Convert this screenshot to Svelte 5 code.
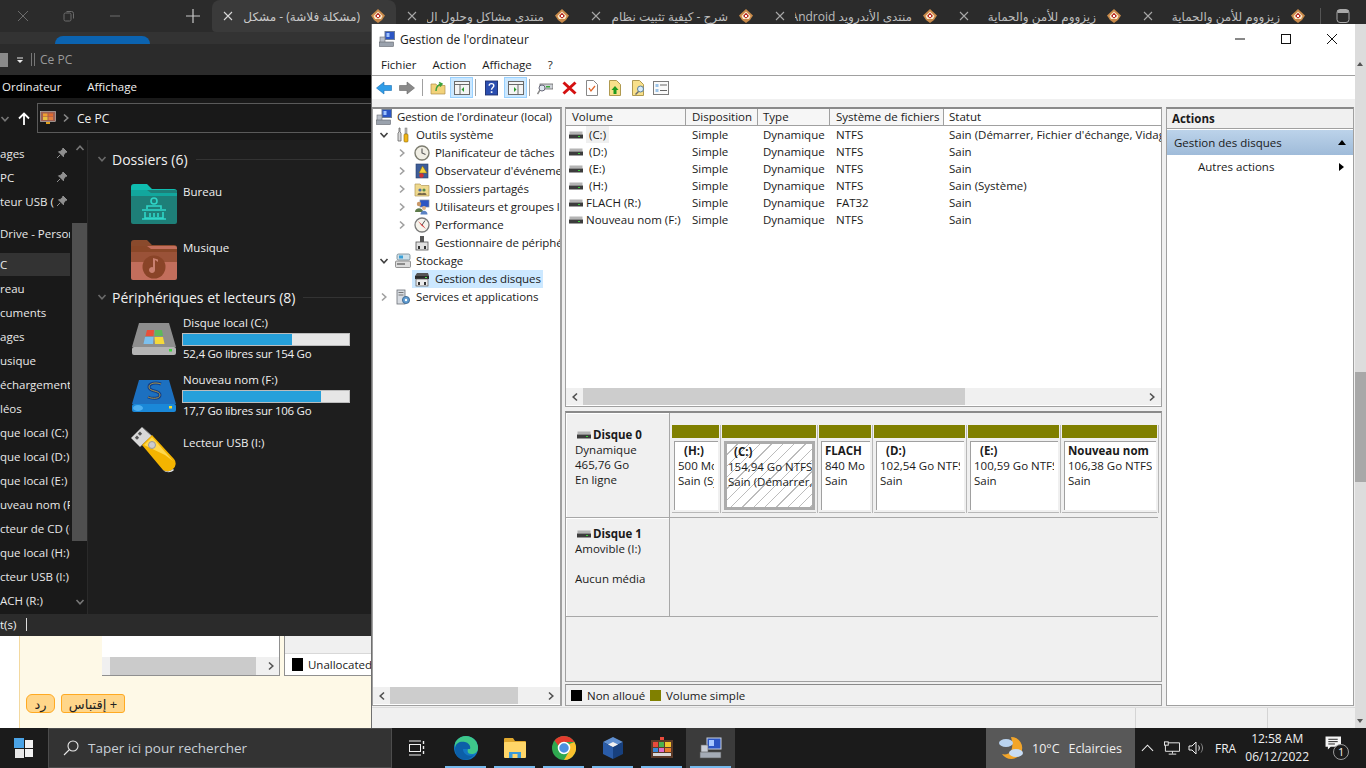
<script lang="ts">
  const tabs = [
    { t: '(مشكلة فلاشة) - مشكل', active: true },
    { t: 'منتدى مشاكل وحلول ال' },
    { t: 'شرح - كيفية تثبيت نظام' },
    { t: 'منتدى الأندرويد Android' },
    { t: 'زيزووم للأمن والحماية' },
    { t: 'زيزووم للأمن والحماية' }
  ];

  const nav = [
    { t: 'ages', pin: true },
    { t: 'PC', pin: true },
    { t: 'teur USB (', pin: true },
    { t: 'Drive - Personnel', gap: true },
    { t: 'C', gap: true, sel: true },
    { t: 'reau' },
    { t: 'cuments' },
    { t: 'ages' },
    { t: 'usique' },
    { t: 'échargements' },
    { t: 'léos' },
    { t: 'que local (C:)' },
    { t: 'que local (D:)' },
    { t: 'que local (E:)' },
    { t: 'uveau nom (F:)' },
    { t: 'cteur de CD (G:)' },
    { t: 'que local (H:)' },
    { t: 'cteur USB (I:)' },
    { t: 'ACH (R:)' }
  ];

  const tree = [
    { t: "Gestion de l'ordinateur (local)", d: 0, ic: 'pc' },
    { t: 'Outils système', d: 1, ic: 'tools', ch: 'down' },
    { t: 'Planificateur de tâches', d: 2, ic: 'clock', ch: 'right' },
    { t: "Observateur d'événements", d: 2, ic: 'event', ch: 'right' },
    { t: 'Dossiers partagés', d: 2, ic: 'share', ch: 'right' },
    { t: 'Utilisateurs et groupes locaux', d: 2, ic: 'users', ch: 'right' },
    { t: 'Performance', d: 2, ic: 'perf', ch: 'right' },
    { t: 'Gestionnaire de périphériques', d: 2, ic: 'dev' },
    { t: 'Stockage', d: 1, ic: 'store', ch: 'down' },
    { t: 'Gestion des disques', d: 2, ic: 'disk', sel: true },
    { t: 'Services et applications', d: 1, ic: 'serv', ch: 'right' }
  ];

  const columns = ['Volume', 'Disposition', 'Type', 'Système de fichiers', 'Statut'];
  const volumes = [
    { v: ' (C:)', fs: 'NTFS', st: "Sain (Démarrer, Fichier d'échange, Vidage sur incident)", cur: true },
    { v: ' (D:)', fs: 'NTFS', st: 'Sain' },
    { v: ' (E:)', fs: 'NTFS', st: 'Sain' },
    { v: ' (H:)', fs: 'NTFS', st: 'Sain (Système)' },
    { v: 'FLACH (R:)', fs: 'FAT32', st: 'Sain' },
    { v: 'Nouveau nom (F:)', fs: 'NTFS', st: 'Sain' }
  ];

  const parts = [
    { n: '(H:)', s: '500 Mo NTFS', h: 'Sain (Système)', w: 50, ind: true },
    { n: '(C:)', s: '154,94 Go NTFS', h: 'Sain (Démarrer, Fichier', w: 97, ind: true, sel: true },
    { n: 'FLACH', s: '840 Mo FAT32', h: 'Sain', w: 55 },
    { n: '(D:)', s: '102,54 Go NTFS', h: 'Sain', w: 94, ind: true },
    { n: '(E:)', s: '100,59 Go NTFS', h: 'Sain', w: 94, ind: true },
    { n: 'Nouveau nom', s: '106,38 Go NTFS', h: 'Sain', w: 98 }
  ];
</script>

{#snippet chev(dir, color = '#606060')}
  <svg class="chev" viewBox="0 0 10 10" fill="none" stroke={color} stroke-width="1.6" aria-hidden="true">
    {#if dir === 'down'}<polyline points="1.5,3 5,6.8 8.5,3" />
    {:else if dir === 'up'}<polyline points="1.5,7 5,3.2 8.5,7" />
    {:else if dir === 'left'}<polyline points="7,1.5 3.2,5 7,8.5" />
    {:else}<polyline points="3,1.5 6.8,5 3,8.5" />{/if}
  </svg>
{/snippet}

{#snippet favicon()}
  <svg class="fav" viewBox="0 0 16 16" aria-hidden="true">
    <path d="M8 1 15 7.5 12 12 8 15 4 12 1 7.5Z" fill="#c98a4a" />
    <path d="M8 3.5 12.5 8 11 11H5L3.5 8Z" fill="#fbeccb" />
    <path d="M8 4.8 11 8 8 10.5 5 8Z" fill="#b3231f" />
    <rect x="7" y="7" width="2" height="2" fill="#fff" />
  </svg>
{/snippet}

{#snippet drive()}
  <svg class="drive" viewBox="0 0 14 8" aria-hidden="true">
    <rect x="0.5" y="0.5" width="13" height="3" fill="#b4b4b4" />
    <rect x="0" y="3.5" width="14" height="4" fill="#3c3c3c" />
    <rect x="9" y="5" width="2" height="1" fill="#38d038" />
  </svg>
{/snippet}

{#snippet treeIcon(ic)}
  <svg class="ticon" viewBox="0 0 16 16" aria-hidden="true">
    {#if ic === 'pc'}
      <rect x="6" y="0.5" width="9.5" height="8" fill="#2b55c4" stroke="#6f7f99" />
      <rect x="7.5" y="2" width="3" height="4" fill="#9fc3ff" />
      <rect x="1" y="6" width="5" height="6" fill="#b8bec8" stroke="#6b6f76" stroke-width="0.6" />
      <rect x="0.5" y="11" width="14" height="4.5" fill="#9aa2ad" stroke="#60656c" stroke-width="0.6" />
    {:else if ic === 'tools'}
      <path d="M4 1v4l-1 1v8h3V6L5 5V1Z" fill="#d9d9d9" stroke="#666" stroke-width="0.8" />
      <rect x="10" y="1" width="2" height="6" fill="#b8b8b8" stroke="#777" stroke-width="0.5" />
      <rect x="9" y="7" width="4" height="8" rx="1" fill="#f0b418" stroke="#8a6a08" stroke-width="0.6" />
    {:else if ic === 'clock'}
      <circle cx="8" cy="8" r="7" fill="#f0eee4" stroke="#7d7d70" stroke-width="1.4" />
      <polyline points="8,3.5 8,8 11.5,9.5" fill="none" stroke="#555" stroke-width="1.1" />
    {:else if ic === 'event'}
      <rect x="2" y="1" width="12" height="14" fill="#3d5d99" stroke="#2a3f6a" stroke-width="0.6" />
      <path d="M8.5 3 13 10H5Z" fill="#f6d33c" stroke="#8a6a08" stroke-width="0.5" />
      <circle cx="7.5" cy="12.5" r="2.2" fill="#d13232" />
    {:else if ic === 'share'}
      <path d="M1 3h5l1.5 1.5H15V15H1Z" fill="#efd98d" stroke="#b2985a" stroke-width="0.7" />
      <circle cx="6" cy="9" r="1.6" fill="#4d6fa8" /><circle cx="10" cy="9" r="1.6" fill="#578c4d" />
      <path d="M3.5 14c0-3 5-3 5 0ZM7.5 14c0-3 5-3 5 0Z" fill="#7a6a4a" />
    {:else if ic === 'users'}
      <rect x="6" y="1" width="9" height="7" fill="#2b55c4" stroke="#7d8ba2" stroke-width="0.7" />
      <circle cx="5" cy="5" r="2.2" fill="#c99868" /><path d="M1 13c0-5 8-5 8 0Z" fill="#5d7a4a" />
      <circle cx="10" cy="9" r="2" fill="#dcb188" /><path d="M6.5 15.5c0-5 7-5 7 0Z" fill="#5b82c4" />
    {:else if ic === 'perf'}
      <circle cx="8" cy="8" r="7" fill="#f6f4ec" stroke="#7a7a7a" stroke-width="1.3" />
      <path d="M4 4 9 8.5 12 12 7.5 8.5Z" fill="#d02020" />
      <path d="M11 3.5 8 8" stroke="#555" fill="none" />
    {:else if ic === 'dev'}
      <rect x="6" y="1" width="4" height="6" fill="#555" />
      <rect x="2" y="7" width="12" height="8" fill="#e2e2e2" stroke="#555" stroke-width="0.8" />
      <rect x="4" y="11" width="2" height="3" fill="#333" /><rect x="10" y="11" width="2" height="3" fill="#333" />
    {:else if ic === 'store'}
      <rect x="2" y="1" width="13" height="6" rx="1.5" fill="#cfe1ea" stroke="#5f7480" stroke-width="0.7" />
      <rect x="4" y="2.5" width="4" height="3" fill="#3aa0d8" />
      <rect x="0.5" y="8" width="15" height="6.5" rx="1" fill="#dcdcdc" stroke="#6a6a6a" stroke-width="0.7" />
      <rect x="2" y="10" width="8" height="2" fill="#8a8a8a" />
    {:else if ic === 'disk'}
      <path d="M3 2h11l1 3H1Z" fill="#555" />
      <rect x="1" y="5" width="14" height="3" fill="#2a2a2a" /><rect x="11" y="6" width="2" height="1" fill="#4ee04e" />
      <rect x="2" y="8" width="12" height="7" fill="#ededed" stroke="#555" stroke-width="0.7" />
      <rect x="4" y="11" width="2" height="3" fill="#333" /><rect x="10" y="11" width="2" height="3" fill="#333" />
    {:else}
      <rect x="2" y="1" width="8" height="14" fill="#d8dce2" stroke="#6d7178" stroke-width="0.8" />
      <rect x="3.5" y="3" width="5" height="1" fill="#777" /><rect x="3.5" y="5.5" width="5" height="1" fill="#777" />
      <circle cx="11" cy="11" r="3.6" fill="#5f9bd0" stroke="#34608a" stroke-width="0.8" /><circle cx="11" cy="11" r="1.2" fill="#fff" />
    {/if}
  </svg>
{/snippet}

<div class="desk">
  <header class="tabstrip">
    <div class="wincaps">
      <svg viewBox="0 0 12 12" aria-hidden="true"><path d="M1 1 11 11M11 1 1 11" stroke="#6c6c6c" fill="none" /></svg>
      <svg viewBox="0 0 12 12" aria-hidden="true"><rect x="1" y="3" width="7" height="8" rx="1.5" fill="none" stroke="#6c6c6c" /><path d="M3.5 1.5h5a2 2 0 0 1 2 2v5" fill="none" stroke="#6c6c6c" /></svg>
      <svg viewBox="0 0 12 12" aria-hidden="true"><path d="M1 6h10" stroke="#6c6c6c" fill="none" /></svg>
    </div>
    <svg class="newtab" viewBox="0 0 16 16" aria-hidden="true"><path d="M8 1v14M1 8h14" stroke="#c8c8c8" fill="none" stroke-width="1.2" /></svg>
    {#each tabs as tab}
      <div class="tab" class:active={tab.active}>
        <svg class="tabx" viewBox="0 0 10 10" aria-hidden="true"><path d="M1 1 9 9M9 1 1 9" stroke={tab.active ? '#d8d8d8' : '#a8a8a8'} fill="none" stroke-width="1.1" /></svg>
        <span class="tabtitle" dir="rtl">{tab.t}</span>
        {@render favicon()}
      </div>
    {/each}
    <i class="tabsep"></i>
    <svg class="tabsearch" viewBox="0 0 14 16" aria-hidden="true"><rect x="1" y="1.5" width="12" height="13" rx="3" fill="none" stroke="#a8a8a8" /><path d="M1.5 4.5h11" stroke="#a8a8a8" /><rect x="1.5" y="2" width="11" height="2.5" fill="#a8a8a8" /></svg>
  </header>

  <div class="browserbar"><span class="pill"></span></div>

  <section class="forum">
    <div class="forum-post">
      <div class="attach">
        <div class="attach-tree">
          <div class="attach-scroll">
            <span class="attach-thumb"></span>
            {@render chev('right', '#555')}
          </div>
        </div>
        <div class="attach-legend"><div class="attach-key"><i></i>Unallocated</div></div>
      </div>
      <div class="forum-btns">
        <span class="fbtn round" dir="rtl">رد</span>
        <span class="fbtn" dir="rtl">+ إقتباس</span>
      </div>
    </div>
  </section>

  <section class="explorer">
    <div class="ex-title">
      <span class="ex-qa"></span>
      <svg class="ex-drop" viewBox="0 0 10 10" aria-hidden="true"><path d="M2 2.5h6v1H2ZM2 5h6L5 8Z" fill="#e8e8e8" /></svg>
      <i class="ex-bar"></i>
      <span>Ce PC</span>
    </div>
    <nav class="ex-menu"><span>Ordinateur</span><span>Affichage</span></nav>
    <div class="ex-address">
      {@render chev('down', '#777')}
      <svg class="ex-up" viewBox="0 0 14 14" aria-hidden="true"><path d="M7 1.5v11.5M2 6.5 7 1.5 12 6.5" stroke="#fff" stroke-width="1.8" fill="none" /></svg>
      <div class="ex-path">
        <svg class="ex-pc" viewBox="0 0 16 14" aria-hidden="true">
          <rect x="0.5" y="0.5" width="15" height="10" fill="#a06050" stroke="#c8c8c8" stroke-width="0.6" />
          <rect x="3" y="2.5" width="4.5" height="3" fill="#f0a030" /><rect x="8.5" y="2.5" width="4.5" height="3" fill="#e06a30" />
          <rect x="3" y="6" width="4.5" height="3" fill="#e8c040" /><rect x="8.5" y="6" width="4.5" height="3" fill="#e08040" />
          <rect x="6" y="11" width="4" height="2" fill="#e0a020" />
        </svg>
        {@render chev('right', '#888')}
        <span>Ce PC</span>
      </div>
    </div>
    <div class="ex-body">
      <aside class="ex-nav">
        {#each nav as row}
          <div class="nav-row" class:gap={row.gap} class:sel={row.sel}>
            <span class="nav-text">{row.t}</span>
            {#if row.pin}
              <svg class="pin" viewBox="0 0 12 12" aria-hidden="true"><path d="M7 1 11 5 9.5 5.5 7.5 8 7.5 9.8 2.5 4.8 4.2 4.5 6.5 2.5ZM4 8 1 11" fill="#8f8f8f" stroke="#8f8f8f" /></svg>
            {/if}
          </div>
        {/each}
        <div class="nav-scroll">
          {@render chev('up', '#777')}
          <span class="nav-thumb"></span>
          {@render chev('down', '#777')}
        </div>
      </aside>
      <div class="ex-main">
        <div class="group first">{@render chev('down', '#6a6a6a')}<span>Dossiers (6)</span><i></i></div>
        <div class="folder">
          <svg class="bigicon" viewBox="0 0 46 40" aria-hidden="true">
            <path d="M0 3a3 3 0 0 1 3-3h13l5 5h22a3 3 0 0 1 3 3v5H0Z" fill="#0fbdb0" />
            <rect y="6" width="46" height="34" rx="2" fill="#1e7f78" />
            <path d="M0 6h16l4 3h26v3H0Z" fill="#12a79d" />
            <g fill="none" stroke="#2fd6c8" stroke-width="1.6">
              <circle cx="23" cy="17" r="3" />
              <path d="M16 25v-3h14v3M11 26h24M14 28v6h18v-6M11 35h24M19 29v4M23 29v4M27 29v4" />
            </g>
          </svg>
          <span class="f-label">Bureau</span>
        </div>
        <div class="folder short">
          <svg class="bigicon" viewBox="0 0 46 40" aria-hidden="true">
            <path d="M0 3a3 3 0 0 1 3-3h13l5 5h22a3 3 0 0 1 3 3v5H0Z" fill="#8a4a2c" />
            <rect y="6" width="46" height="34" rx="2" fill="#c26e5c" />
            <path d="M0 6h16l4 3h26v3H0Z" fill="#8a4728" />
            <path d="M0 12h46v10H0Z" fill="#9a5238" />
            <circle cx="23" cy="27" r="11.5" fill="#8a4428" />
            <path d="M24 20v10a3 3 0 1 1-2-2.8V18l5 1.5v2.5Z" fill="#c98070" />
          </svg>
          <span class="f-label">Musique</span>
        </div>
        <div class="group">{@render chev('down', '#6a6a6a')}<span>Périphériques et lecteurs (8)</span><i></i></div>
        <div class="dsk first">
          <svg class="bigicon hd" viewBox="0 0 46 36" aria-hidden="true">
            <path d="M8 2h30l7 24H1Z" fill="#8e8e8e" /><rect x="1" y="26" width="44" height="8" rx="2" fill="#b4b4b4" />
            <path d="M16 9h7l-.5 6h-8Z" fill="#e8503a" /><path d="M24 9h7l1 6h-8.500Z" fill="#5eb85a" />
            <path d="M14 16h8.500l-.5 7H12.500Z" fill="#7cc0ee" /><path d="M23.500 16H32l1.500 7H24Z" fill="#f5d93a" />
            <rect x="38" y="28" width="3" height="2.500" fill="#3fd23f" />
          </svg>
          <div class="dsk-text">
            <span>Disque local (C:)</span>
            <div class="bar"><i class="c"></i></div>
            <span class="free">52,4 Go libres sur 154 Go</span>
          </div>
        </div>
        <div class="dsk">
          <svg class="bigicon hd" viewBox="0 0 46 36" aria-hidden="true">
            <path d="M8 2h30l7 24H1Z" fill="#1c70c0" /><rect x="1" y="26" width="44" height="8" rx="2" fill="#1a88d8" />
            <ellipse cx="7" cy="30" rx="5" ry="3" fill="#4db0f0" />
            <path d="M30 6c-5-2-12-1-12 3 0 5 11 3 11 8 0 4-8 4-12 2" fill="none" stroke="#123e88" stroke-width="3" />
            <path d="M30 6c-5-2-12-1-12 3 0 5 11 3 11 8 0 4-8 4-12 2" fill="none" stroke="#c8a83a" stroke-width="0.8" />
            <rect x="38" y="28" width="3" height="2.500" fill="#f0e030" />
          </svg>
          <div class="dsk-text">
            <span>Nouveau nom (F:)</span>
            <div class="bar"><i class="f"></i></div>
            <span class="free">17,7 Go libres sur 106 Go</span>
          </div>
        </div>
        <div class="usb">
          <svg class="bigicon usbicon" viewBox="0 0 46 46" aria-hidden="true">
            <path d="M0 11 11 0 21 9 9 20Z" fill="#d8d8d8" stroke="#777" />
            <rect x="8" y="5" width="3" height="3" fill="#555" transform="rotate(45 9 6)" /><rect x="5" y="9" width="3" height="3" fill="#555" transform="rotate(45 6 10)" />
            <path d="M11 18 21 8 43 32a7 7 0 0 1-1 10c-3 3-7 3-10 1Z" fill="#f4b400" />
            <path d="M13 18 21 10 42 34 34 28Z" fill="#ffd84d" />
            <circle cx="21" cy="18" r="3.500" fill="#ccc" stroke="#999" />
            <path d="M32 43c3 2 7 2 10-1l1 1c-3 3-8 3-11 0Z" fill="#e8e8e8" />
          </svg>
          <span class="f-label">Lecteur USB (I:)</span>
        </div>
      </div>
    </div>
    <div class="ex-status"><span>t(s)</span><i></i></div>
  </section>

  <section class="mmc">
    <div class="mmc-title">
      {@render treeIcon('pc')}
      <span class="mmc-name">Gestion de l'ordinateur</span>
      <div class="mmc-caps">
        <svg viewBox="0 0 12 12" aria-hidden="true"><path d="M1 6h10" stroke="#111" fill="none" /></svg>
        <svg viewBox="0 0 12 12" aria-hidden="true"><rect x="1.500" y="1.500" width="9" height="9" stroke="#111" fill="none" /></svg>
        <svg viewBox="0 0 12 12" aria-hidden="true"><path d="M1 1 11 11M11 1 1 11" stroke="#111" fill="none" /></svg>
      </div>
    </div>
    <nav class="mmc-menu"><span>Fichier</span><span>Action</span><span>Affichage</span><span>?</span></nav>
    <div class="mmc-tools">
      <svg class="t" viewBox="0 0 16 14" aria-hidden="true"><path d="M0.500 7 8 1v3.500h7.500v5H8V13Z" fill="#2f9de8" stroke="#1b6fb4" stroke-width="0.6" /></svg>
      <svg class="t" viewBox="0 0 16 14" aria-hidden="true"><path d="M15.500 7 8 1v3.500H0.500v5H8V13Z" fill="#8a8a8a" stroke="#666" stroke-width="0.6" /></svg>
      <i class="sep"></i>
      <svg class="t" viewBox="0 0 16 14" aria-hidden="true"><path d="M1 3h5l1 1.500h8V13H1Z" fill="#f2d27a" stroke="#b0904c" stroke-width="0.7" /><path d="M6 10c0-4 2-6 5-7M9 1.500 12 3 10 5.500" fill="none" stroke="#3ca03c" stroke-width="1.500" /></svg>
      <span class="tbtn on">
        <svg viewBox="0 0 16 14" aria-hidden="true"><rect x="0.500" y="0.500" width="15" height="13" fill="#f4f4f4" stroke="#6a6a6a" /><path d="M1 3.500h14" stroke="#6a6a6a" /><path d="M6 3.500V13.500" stroke="#6a6a6a" /><path d="M10 6v5L7.500 8.500Z" fill="#2a9a2a" /></svg>
      </span>
      <i class="sep"></i>
      <svg class="t help" viewBox="0 0 14 16" aria-hidden="true"><rect x="0.500" y="0.500" width="13" height="15" fill="#2b4eb0" stroke="#1c2f70" /><path d="M4.500 5.500c0-3 5-3 5 0 0 2-2.500 2-2.500 4.500" fill="none" stroke="#fff" stroke-width="1.500" /><rect x="6.200" y="11.500" width="1.800" height="1.800" fill="#fff" /></svg>
      <span class="tbtn on">
        <svg viewBox="0 0 16 14" aria-hidden="true"><rect x="0.500" y="0.500" width="15" height="13" fill="#f4f4f4" stroke="#6a6a6a" /><path d="M1 3.500h14" stroke="#6a6a6a" /><path d="M10 3.500V13.500" stroke="#6a6a6a" /><path d="M6 6v5L8.500 8.500Z" fill="#2a9a2a" /></svg>
      </span>
      <i class="sep"></i>
      <svg class="t" viewBox="0 0 16 14" aria-hidden="true"><rect x="3" y="3" width="13" height="5" fill="#cfd3d8" stroke="#555" stroke-width="0.7" /><rect x="9" y="5" width="4" height="1.500" fill="#38a838" /><circle cx="5" cy="7" r="3" fill="#dfe8f0" stroke="#667" /><path d="M3 9 0.500 13" stroke="#888" stroke-width="1.500" /></svg>
      <svg class="t del" viewBox="0 0 15 14" aria-hidden="true"><path d="M1.500 1.500 13.500 12.500M13.500 1.500 1.500 12.500" stroke="#d41010" stroke-width="3" /></svg>
      <svg class="t doc" viewBox="0 0 12 16" aria-hidden="true"><path d="M0.500 0.500h7l4 4v11H0.500Z" fill="#fff" stroke="#888" /><path d="M3 8 5 11 9 6" fill="none" stroke="#e0662a" stroke-width="1.300" /></svg>
      <svg class="t doc" viewBox="0 0 12 16" aria-hidden="true"><path d="M0.500 0.500h7l4 4v11H0.500Z" fill="#f8e08a" stroke="#b09a50" /><path d="M6 6 9.500 10H7.500v4h-3v-4H2.500Z" fill="#1f9a1f" /></svg>
      <svg class="t doc2" viewBox="0 0 14 16" aria-hidden="true"><path d="M0.500 0.500h7l4 4v11H0.500Z" fill="#f8e08a" stroke="#b09a50" /><circle cx="8.500" cy="9" r="3" fill="#d8ecfa" stroke="#5a7f9a" /><path d="M6.500 11.500 3.500 14.500" stroke="#6a6a6a" stroke-width="1.500" /></svg>
      <svg class="t" viewBox="0 0 16 14" aria-hidden="true"><rect x="0.500" y="0.500" width="15" height="13" fill="#fafafa" stroke="#7c7c7c" /><rect x="2.500" y="3" width="3" height="3" fill="#9cc4e8" /><rect x="2.500" y="8" width="3" height="3" fill="#9cc4e8" /><path d="M7 4h7M7 9.500h7" stroke="#666" /></svg>
    </div>

    <div class="panes">
      <div class="pane tree">
        <div class="tree-rows">
          {#each tree as n}
            <div class="tree-row d{n.d}">
              <span class="twist">{#if n.ch}{@render chev(n.ch, n.ch === 'down' ? '#404040' : '#a0a0a0')}{/if}</span>
              <span class="tree-node" class:sel={n.sel}>
                {@render treeIcon(n.ic)}
                <span class="tree-label">{n.t}</span>
              </span>
            </div>
          {/each}
        </div>
        <div class="hscroll">
          {@render chev('left', '#505050')}
          <span class="track"><i class="thumb-tree"></i></span>
          {@render chev('right', '#505050')}
        </div>
      </div>

      <div class="center">
        <div class="pane list">
          <div class="grid head">
            {#each columns as c}<span>{c}</span>{/each}
          </div>
          <div class="list-rows">
            {#each volumes as v}
              <div class="grid row">
                <span class="vol">{@render drive()}<b class:cur={v.cur}>{v.v}</b></span>
                <span>Simple</span>
                <span>Dynamique</span>
                <span>{v.fs}</span>
                <span>{v.st}</span>
              </div>
            {/each}
          </div>
          <div class="hscroll">
            {@render chev('left', '#505050')}
            <span class="track"><i class="thumb-list"></i></span>
            {@render chev('right', '#505050')}
          </div>
        </div>

        <div class="pane graph">
          <div class="disk-row zero">
            <div class="disk-info">
              <div class="disk-name">{@render drive()}<strong>Disque 0</strong></div>
              <div>Dynamique</div>
              <div>465,76 Go</div>
              <div>En ligne</div>
            </div>
            <div class="disk-parts">
              {#each parts as p}
                <div class="part" style="width: {p.w}px">
                  <div class="part-cap"></div>
                  <div class="part-box" class:sel={p.sel}>
                    <div class="part-in">
                      <strong class:ind={p.ind}>{p.n}</strong>
                      <span>{p.s}</span>
                      <span>{p.h}</span>
                    </div>
                  </div>
                </div>
              {/each}
            </div>
          </div>
          <div class="disk-row one">
            <div class="disk-info">
              <div class="disk-name">{@render drive()}<strong>Disque 1</strong></div>
              <div>Amovible (I:)</div>
              <div>&nbsp;</div>
              <div>Aucun média</div>
            </div>
            <div class="disk-parts"></div>
          </div>
        </div>

        <div class="pane legend">
          <i class="swatch black"></i><span>Non alloué</span>
          <i class="swatch olive"></i><span>Volume simple</span>
        </div>
      </div>

      <div class="pane actions">
        <div class="act-head">Actions</div>
        <div class="act-sel"><span>Gestion des disques</span><i class="tri-up"></i></div>
        <div class="act-item"><span>Autres actions</span><i class="tri-right"></i></div>
      </div>
    </div>

    <div class="mmc-status"><i></i><i></i></div>
  </section>

  <aside class="page-scroll">
    <i class="arr-up"></i>
    <span></span>
    <i class="arr-down"></i>
  </aside>

  <footer class="taskbar">
    <svg class="start" viewBox="0 0 20 20" aria-hidden="true">
      <rect x="0" y="0" width="10" height="10" fill="#4aa3e6" />
      <rect x="11" y="2" width="8" height="8" fill="#f2f2f2" />
      <rect x="1" y="11" width="9" height="9" fill="#e8e8e8" />
      <rect x="11" y="11" width="8" height="8" fill="#f2f2f2" />
    </svg>
    <div class="search">
      <svg viewBox="0 0 16 16" aria-hidden="true"><circle cx="10" cy="6" r="5" fill="none" stroke="#e8e8e8" stroke-width="1.100" /><path d="M6.500 9.500 1 15" stroke="#e8e8e8" stroke-width="1.100" /></svg>
      <span>Taper ici pour rechercher</span>
    </div>
    <div class="apps">
      <span class="app">
        <svg viewBox="0 0 18 16" aria-hidden="true"><path d="M1 1h12M1 15h12" stroke="#f0f0f0" /><rect x="1.500" y="4.500" width="11" height="7" fill="none" stroke="#f0f0f0" /><path d="M15.500 1v3M15.500 6v3M15.500 11v3" stroke="#f0f0f0" stroke-width="1.400" /></svg>
      </span>
      <span class="app open">
        <svg viewBox="0 0 24 24" aria-hidden="true">
          <circle cx="12" cy="12" r="12" fill="#1277c4" />
          <path d="M12 0a12 12 0 0 1 12 12c0 4-3 6-6.500 6C14 18 13 16 14 13c-4-3-10 0-9 6C1 15-1 8 3 4a12 12 0 0 1 9-4Z" fill="#3ec88a" />
          <path d="M1 12C2 6 7 5 11 6c4 1 6 4 5 7H9c0 5 5 8 11 6-4 5-11 6-15 3-3-2-4-6-4-10Z" fill="#0c5fa8" />
        </svg>
      </span>
      <span class="app open">
        <svg viewBox="0 0 24 22" aria-hidden="true">
          <path d="M1 2a1 1 0 0 1 1-1h8l2 3h10a1 1 0 0 1 1 1v3H1Z" fill="#e0a82e" />
          <rect x="1" y="5" width="22" height="16" rx="1" fill="#ffd668" />
          <rect x="6" y="15" width="12" height="6" fill="#3a9ad9" /><rect x="9.500" y="17" width="5" height="4" fill="#ffd668" />
        </svg>
      </span>
      <span class="app open">
        <svg viewBox="0 0 24 24" aria-hidden="true">
          <circle cx="12" cy="12" r="12" fill="#2fa84f" />
          <path d="M12 0a12 12 0 0 1 10.400 6H12a6 6 0 0 0-5.600 3.800L2.600 4.600A12 12 0 0 1 12 0Z" fill="#e33b2e" />
          <path d="M22.400 6A12 12 0 0 1 12 24l5.200-9A6 6 0 0 0 16 8.400Z" fill="#fbc02d" />
          <circle cx="12" cy="12" r="5.500" fill="#4a90e2" stroke="#fff" stroke-width="1.500" />
        </svg>
      </span>
      <span class="app open">
        <svg viewBox="0 0 24 24" aria-hidden="true">
          <path d="M12 1 22 6 12 11 2 6Z" fill="#5f8fd0" />
          <path d="M2 6 12 11V23L2 18Z" fill="#2a5ca8" />
          <path d="M22 6 12 11V23L22 18Z" fill="#17407e" />
          <path d="M12 11 7 8.500 12 6 17 8.500Z" fill="#f2f2f2" />
        </svg>
      </span>
      <span class="app open">
        <svg viewBox="0 0 24 24" aria-hidden="true">
          <rect x="1" y="4" width="22" height="18" fill="#5b3a28" />
          <rect x="3" y="6" width="5" height="5" fill="#e84a3c" /><rect x="9" y="6" width="5" height="5" fill="#4bb04f" /><rect x="15" y="6" width="6" height="5" fill="#f2c22e" />
          <rect x="3" y="12" width="5" height="4" fill="#3a8ad9" /><rect x="9" y="12" width="5" height="4" fill="#e06ac8" /><rect x="15" y="12" width="6" height="4" fill="#e87a2e" />
          <rect x="3" y="17" width="18" height="3" fill="#d8d8d8" />
          <path d="M10 1h4v3h-4Z" fill="#e84a3c" />
        </svg>
      </span>
      <span class="app open active">
        <svg viewBox="0 0 24 24" aria-hidden="true">
          <rect x="8" y="2" width="14" height="11" fill="#2b55c4" stroke="#c8d0dc" />
          <rect x="10" y="4" width="5" height="6" fill="#a8c8ff" />
          <rect x="2" y="9" width="7" height="8" fill="#c8ccd4" stroke="#666" stroke-width="0.600" />
          <rect x="1" y="16" width="21" height="6" fill="#a4abb6" stroke="#555" stroke-width="0.600" />
        </svg>
      </span>
    </div>
    <div class="weather">
      <svg viewBox="0 0 26 24" aria-hidden="true">
        <path d="M13 1a11 11 0 1 1-9 17c7 2 13-3 9-17Z" fill="#f2a52a" />
        <ellipse cx="8" cy="7" rx="7" ry="4" fill="#b9d3f0" />
        <ellipse cx="18" cy="17" rx="7" ry="4" fill="#c8dcf4" />
      </svg>
      <span class="temp">10°C</span>
      <span>Eclaircies</span>
    </div>
    <div class="tray">
      <svg class="tr-chev" viewBox="0 0 14 8" aria-hidden="true"><polyline points="1,7 7,1 13,7" fill="none" stroke="#f0f0f0" stroke-width="1.100" /></svg>
      <svg class="tr-net" viewBox="0 0 17 14" aria-hidden="true"><rect x="0.500" y="0.500" width="4" height="3.500" fill="none" stroke="#f0f0f0" /><path d="M4.500 1.500H16.500V10.500H1.500V4M9 10.500V13M5 13.500H13" fill="none" stroke="#f0f0f0" /></svg>
      <svg class="tr-vol" viewBox="0 0 17 14" aria-hidden="true"><path d="M1 5h3l4-4v12l-4-4H1Z" fill="none" stroke="#f0f0f0" /><path d="M10.500 4.500c1 1.500 1 3.500 0 5" fill="none" stroke="#f0f0f0" /><path d="M13 2.500c2 3 2 6 0 9" fill="none" stroke="#8a8a8a" /></svg>
      <span class="lang">FRA</span>
      <div class="clock"><span>12:58 AM</span><span>06/12/2022</span></div>
      <div class="notif">
        <svg viewBox="0 0 18 16" aria-hidden="true"><path d="M0.500 0.500h16.500v11H6l-3 3v-3H0.500Z" fill="#f5f5f5" /><path d="M3.500 3.500h10M3.500 6h10M3.500 8.500h7" stroke="#1b1b1b" /></svg>
        <b>1</b>
      </div>
    </div>
  </footer>
</div>

<style>
  :global(body) {
    margin: 0;
    background: #1b1b1b;
  }

  .desk {
    position: relative;
    width: 1366px;
    height: 768px;
    overflow: hidden;
    font-family: "Open Sans", "DejaVu Sans", sans-serif;
    font-size: 11.5px;
    color: #1a1a1a;
    background: #fff;
  }

  .desk svg {
    display: block;
    flex-shrink: 0;
  }

  .chev {
    width: 10px;
    height: 10px;
  }

  /* --- Browser behind everything --- */
  .tabstrip {
    position: absolute;
    left: 0;
    top: 0;
    width: 1366px;
    height: 32px;
    display: flex;
    align-items: center;
    background: #2b2b2b;
  }

  .wincaps {
    display: flex;
    width: 138px;
    justify-content: space-around;
  }

  .wincaps svg {
    width: 12px;
    height: 12px;
  }

  .newtab {
    width: 16px;
    height: 16px;
    margin: 0 11px 0 47px;
  }

  .tab {
    width: 184px;
    height: 32px;
    box-sizing: border-box;
    display: flex;
    align-items: center;
    padding: 0 10px 0 11px;
    color: #bdbdbd;
    font-size: 12px;
  }

  .tab.active {
    background: #3a3a3a;
    border-radius: 8px 8px 0 0;
    border-bottom-left-radius: 4px;
    color: #c9c9c9;
  }

  .tabx {
    width: 10px;
    height: 10px;
  }

  .tabtitle {
    flex: 1;
    min-width: 0;
    margin: 0 10px;
    overflow: hidden;
    white-space: nowrap;
  }

  .fav {
    width: 16px;
    height: 16px;
  }

  .tabsep {
    width: 1px;
    height: 16px;
    margin-left: 4px;
    background: #555;
  }

  .tabsearch {
    width: 14px;
    height: 16px;
    margin-left: 15px;
  }

  .browserbar {
    position: absolute;
    left: 0;
    top: 32px;
    width: 1366px;
    height: 12px;
    background: #333;
    overflow: hidden;
  }

  .pill {
    display: block;
    width: 95px;
    height: 8px;
    margin: 4px 0 0 55px;
    border-radius: 10px 10px 0 0;
    background: #0b63b0;
  }

  /* --- Forum page peeking out under the explorer --- */
  .forum {
    position: absolute;
    left: 0;
    top: 636px;
    width: 372px;
    height: 92px;
    padding-left: 19px;
    box-sizing: border-box;
    background: #fff;
  }

  .forum-post {
    height: 92px;
    background: #fef9e7;
    border-left: 1px solid #f3d9a0;
  }

  .attach {
    display: flex;
    height: 40px;
    padding-left: 82px;
  }

  .attach-tree {
    width: 178px;
    display: flex;
    flex-direction: column;
    justify-content: flex-end;
    background: #fff;
    border-bottom: 1px solid #909090;
    border-right: 1px solid #909090;
  }

  .attach-scroll {
    height: 18px;
    display: flex;
    align-items: center;
    background: #f0f0f0;
  }

  .attach-thumb {
    width: 146px;
    height: 18px;
    margin: 0 10px 0 8px;
    background: #cbcbcb;
  }

  .attach-legend {
    flex: 1;
    margin-left: 4px;
    display: flex;
    align-items: flex-end;
    background: #f0f0f0;
    border-left: 1px solid #909090;
    border-bottom: 1px solid #909090;
  }

  .attach-key {
    height: 21px;
    width: 100%;
    display: flex;
    align-items: center;
    gap: 5px;
    padding-left: 7px;
    background: #fff;
    border-top: 1px solid #d8d8d8;
    white-space: nowrap;
    font-size: 11.5px;
  }

  .attach-key i {
    width: 11px;
    height: 13px;
    flex-shrink: 0;
    background: #000;
  }

  .forum-btns {
    display: flex;
    gap: 6px;
    padding: 18px 0 0 6px;
  }

  .fbtn {
    height: 19px;
    width: 64px;
    box-sizing: border-box;
    display: flex;
    align-items: center;
    justify-content: center;
    font-size: 13px;
    background: #ffd68a;
    border: 1px solid #ffaa22;
    border-radius: 3px;
    color: #222;
  }

  .fbtn.round {
    width: 29px;
    border-radius: 6px;
  }

  /* --- Dark explorer window --- */
  .explorer {
    position: absolute;
    left: 0;
    top: 44px;
    width: 372px;
    height: 592px;
    display: flex;
    flex-direction: column;
    background: #1e1e1e;
    color: #f0f0f0;
  }

  .ex-title {
    height: 31px;
    display: flex;
    align-items: center;
    background: #2b2b2b;
    color: #9a9a9a;
    font-size: 12px;
  }

  .ex-qa {
    width: 8px;
    height: 14px;
    background: #8a8a8a;
  }

  .ex-drop {
    width: 10px;
    height: 10px;
    margin-left: 7px;
  }

  .ex-bar {
    width: 2px;
    height: 13px;
    margin: 0 5px 0 6px;
    border: solid #777;
    border-width: 0 1px;
  }

  .ex-menu {
    height: 23px;
    display: flex;
    align-items: center;
    gap: 26px;
    padding-left: 2px;
    background: #000;
    font-size: 11.5px;
  }

  .ex-address {
    height: 42px;
    box-sizing: border-box;
    display: flex;
    align-items: center;
    background: #191919;
    font-size: 12px;
  }

  .ex-up {
    width: 14px;
    height: 14px;
    margin: 0 6px 0 7px;
  }

  .ex-path {
    flex: 1;
    height: 30px;
    margin-top: -2px;
    display: flex;
    align-items: center;
    box-sizing: border-box;
    border: 1px solid #5a5a5a;
    padding-left: 2px;
  }

  .ex-pc {
    width: 16px;
    height: 14px;
  }

  .ex-path .chev {
    margin: 0 2px 0 5px;
  }

  .ex-path span {
    margin-left: 4px;
  }

  .ex-body {
    flex: 1;
    min-height: 0;
    display: flex;
  }

  .ex-nav {
    position: relative;
    width: 88px;
    padding-top: 1px;
    box-sizing: border-box;
    flex-shrink: 0;
    overflow: hidden;
    background: #191919;
    border-right: 1px solid #2a2a2a;
  }

  .nav-row {
    height: 24px;
    width: 70px;
    display: flex;
    align-items: center;
    overflow: hidden;
    color: #e8e8e8;
    position: relative;
  }

  .nav-row.gap {
    margin-top: 8px;
  }

  .nav-row.sel {
    height: 23px;
    background: #333;
  }

  .nav-text {
    white-space: nowrap;
  }

  .pin {
    position: absolute;
    left: 56px;
    top: 6px;
    width: 12px;
    height: 12px;
    background: #191919;
  }

  .nav-scroll {
    position: absolute;
    left: 72px;
    top: 0;
    width: 15px;
    height: 474px;
    display: flex;
    flex-direction: column;
    align-items: center;
    padding-top: 3px;
    box-sizing: border-box;
  }

  .nav-thumb {
    width: 15px;
    height: 318px;
    margin-top: 70px;
    margin-bottom: 56px;
    background: #4f4f4f;
  }

  .ex-main {
    flex: 1;
    min-width: 0;
    padding-top: 9px;
    overflow: hidden;
  }

  .group {
    height: 20px;
    display: flex;
    align-items: center;
    padding-left: 9px;
    font-size: 14px;
    color: #f0f0f0;
  }

  .group span {
    margin-left: 5px;
    white-space: nowrap;
  }

  .group i {
    flex: 1;
    height: 1px;
    margin-left: 8px;
    background: #333;
  }

  .folder {
    height: 56px;
    box-sizing: border-box;
    padding-left: 43px;
    display: flex;
    gap: 6px;
  }

  .group.first + .folder {
    margin-top: 15px;
  }

  .folder.short {
    height: 47px;
  }

  .bigicon {
    width: 46px;
    height: 40px;
  }

  .bigicon.hd {
    height: 36px;
  }

  .f-label {
    line-height: 16px;
  }

  .dsk {
    display: flex;
    align-items: center;
    gap: 5px;
    padding-left: 43px;
    margin-top: 10px;
  }

  .dsk.first {
    margin-top: 8px;
  }

  .dsk-text {
    display: flex;
    flex-direction: column;
    line-height: 16px;
    padding-left: 1px;
  }

  .free {
    letter-spacing: -0.25px;
  }

  .bar {
    width: 166px;
    height: 11px;
    margin: 2px 0 0 -1px;
    background: #e6e6e6;
    border: 1px solid #bcbcbc;
  }

  .bar i {
    display: block;
    height: 11px;
    background: #26a0da;
  }

  .bar .c {
    width: 109px;
  }

  .bar .f {
    width: 138px;
  }

  .usb {
    display: flex;
    gap: 6px;
    padding-left: 43px;
    margin-top: 8px;
  }

  .usbicon {
    height: 46px;
  }

  .usb .f-label {
    margin-top: 8px;
  }

  .ex-status {
    height: 22px;
    box-sizing: border-box;
    padding-bottom: 2px;
    display: flex;
    align-items: center;
    gap: 10px;
    background: #2b2b2b;
  }

  .ex-status i {
    width: 1px;
    height: 13px;
    background: #ddd;
  }

  /* --- Gestion de l'ordinateur --- */
  .mmc {
    position: absolute;
    left: 371px;
    top: 24px;
    width: 984px;
    height: 704px;
    box-sizing: border-box;
    display: flex;
    flex-direction: column;
    background: #f0f0f0;
    border-left: 1px solid #707070;
    box-shadow: 1px 0 0 #999;
  }

  .mmc-title {
    height: 29px;
    display: flex;
    align-items: center;
    padding-left: 7px;
    background: #fff;
    font-size: 12px;
  }

  .mmc-name {
    margin: 1px 0 0 5px;
  }

  .mmc-caps {
    margin-left: auto;
    display: flex;
    gap: 34px;
    padding-right: 17px;
  }

  .mmc-caps svg {
    width: 12px;
    height: 12px;
  }

  .mmc-menu {
    height: 23px;
    display: flex;
    align-items: center;
    gap: 16px;
    padding-left: 9px;
    box-sizing: border-box;
    background: #fff;
    border-bottom: 1px solid #a0a0a0;
    font-size: 11.5px;
  }

  .mmc-tools {
    height: 23px;
    display: flex;
    align-items: center;
    padding-left: 4px;
    background: #fff;
    gap: 7px;
  }

  .mmc-tools .t {
    width: 16px;
    height: 14px;
  }

  .mmc-tools .help {
    width: 13px;
    height: 16px;
    margin: 0 2px;
  }

  .mmc-tools .del {
    width: 15px;
    height: 14px;
    margin: 0 2px;
  }

  .mmc-tools .doc {
    width: 12px;
    height: 16px;
    margin-right: 4px;
  }

  .mmc-tools .doc2 {
    width: 14px;
    height: 16px;
  }

  .sep {
    width: 1px;
    height: 17px;
    background: #a0a0a0;
  }

  .tbtn {
    width: 23px;
    height: 21px;
    box-sizing: border-box;
    display: flex;
    align-items: center;
    justify-content: center;
    background: #cce8ff;
    border: 1px solid #99d1ff;
  }

  .tbtn svg {
    width: 16px;
    height: 14px;
  }

  .mmc-tools .tbtn {
    margin: 0 -5px 0 -3px;
  }

  .panes {
    height: 599px;
    margin-top: 8px;
    display: flex;
    gap: 3px;
  }

  .pane {
    box-sizing: border-box;
    background: #fff;
    border: 1px solid #a0a0a0;
    border-top: 2px solid #8a8a8a;
  }

  .tree {
    width: 190px;
    display: flex;
    flex-direction: column;
    border-right-width: 2px;
  }

  .tree-rows {
    flex: 1;
    min-height: 0;
    overflow: hidden;
    margin-top: -1px;
  }

  .tree-row {
    height: 18px;
    display: flex;
    align-items: center;
    white-space: nowrap;
  }

  .tree-row.d0 .twist {
    display: none;
  }

  .tree-row.d0,
  .tree-row.d1 {
    padding-left: 3px;
  }

  .tree-row.d2 {
    padding-left: 21px;
  }

  .twist {
    width: 16px;
    display: flex;
    justify-content: center;
    flex-shrink: 0;
  }

  .tree-node {
    display: flex;
    align-items: center;
    height: 18px;
    padding-right: 2px;
  }

  .tree-row.d1 .tree-node {
    margin-left: 1px;
    padding-left: 2px;
  }

  .tree-row.d2 .tree-node {
    margin-left: 2px;
    padding-left: 2px;
  }

  .tree-node.sel {
    background: #cce8ff;
  }

  .ticon {
    width: 16px;
    height: 16px;
  }

  .tree-label {
    margin-left: 5px;
    line-height: 18px;
    letter-spacing: -0.1px;
  }

  .hscroll {
    height: 17px;
    margin-bottom: 1px;
    display: flex;
    align-items: center;
    justify-content: space-between;
    padding: 0 4px;
    background: #f0f0f0;
  }

  .track {
    flex: 1;
    height: 17px;
    margin: 0 3px;
  }

  .track i {
    display: block;
    height: 17px;
    background: #cdcdcd;
  }

  .thumb-tree {
    width: 128px;
  }

  .thumb-list {
    width: 382px;
  }

  .center {
    width: 597px;
    display: flex;
    flex-direction: column;
  }

  .list {
    height: 301px;
    display: flex;
    flex-direction: column;
  }

  .grid {
    display: grid;
    grid-template-columns: 120px 72px 72px 114px 1fr;
    white-space: nowrap;
    overflow: hidden;
  }

  .head {
    height: 17px;
    box-sizing: border-box;
    background: #fff;
    border-bottom: 1px solid #a0a0a0;
    line-height: 16px;
  }

  .head span {
    padding-left: 6px;
    border-right: 1px solid #a0a0a0;
    background: #f6f6f6;
  }

  .head span:nth-child(3),
  .head span:last-child {
    padding-left: 5px;
  }

  .head span:last-child {
    background: #fff;
    border-right: 0;
  }

  .list-rows {
    flex: 1;
  }

  .row {
    height: 17px;
    line-height: 17px;
  }

  .row span {
    padding-left: 6px;
  }

  .row span:nth-child(3),
  .row span:last-child {
    padding-left: 5px;
  }

  .row .vol {
    display: flex;
    align-items: center;
    padding-left: 3px;
  }

  .vol b {
    font-weight: 400;
    margin-left: 3px;
    padding-right: 3px;
    white-space: pre;
  }

  .vol b.cur {
    background: #f0f0f0;
  }

  .drive {
    width: 14px;
    height: 8px;
  }

  .graph {
    height: 271px;
    margin-top: 4px;
    background: #f0f0f0;
  }

  .disk-row {
    display: flex;
    height: 99px;
    box-sizing: border-box;
    margin-right: 3px;
    border-bottom: 1px solid #a8a8a8;
  }

  .disk-row.zero {
    height: 105px;
  }

  .disk-info {
    width: 104px;
    flex-shrink: 0;
    box-sizing: border-box;
    padding: 8px 0 0 9px;
    line-height: 15px;
    white-space: nowrap;
    border-right: 1px solid #a8a8a8;
    box-shadow: inset 1px 1px 0 #fff;
  }

  .disk-row.zero .disk-info {
    padding-top: 14px;
  }

  .disk-name {
    display: flex;
    align-items: center;
    gap: 2px;
    padding-left: 2px;
  }

  .disk-parts {
    flex: 1;
    display: flex;
    padding: 12px 0 4px 1px;
  }

  .part {
    flex-shrink: 0;
    display: flex;
    flex-direction: column;
    box-sizing: border-box;
    padding: 0 1px;
    border-right: 1px solid #b8b8b8;
  }

  .part-cap {
    height: 13px;
    background: #808000;
  }

  .part-box {
    flex: 1;
    margin-top: 1px;
    padding: 2px 1px 2px 2px;
    box-sizing: border-box;
    display: flex;
    min-height: 0;
    min-width: 0;
    border-bottom: 1px solid #b8b8b8;
  }

  .part-in {
    flex: 1;
    min-width: 0;
    padding-left: 3px;
    padding-top: 1px;
    background: #fff;
    border: solid #a0a0a0;
    border-width: 1px 0 0 1px;
    overflow: hidden;
    display: flex;
    flex-direction: column;
    line-height: 15px;
    white-space: nowrap;
  }

  .part-in span,
  .part-in strong {
    overflow: hidden;
    margin-right: 4px;
  }

  .part-box.sel .part-in {
    border: 3px solid #ababab;
    padding: 0 0 0 1px;
    background: repeating-linear-gradient(135deg, #fff 0 7px, #bcbcbc 7px 8px);
  }

  .part-box.sel .part-in span,
  .part-box.sel .part-in strong {
    margin-right: 0;
  }

  .part-in strong.ind {
    padding-left: 6px;
  }

  .legend {
    height: 22px;
    margin-top: 2px;
    display: flex;
    align-items: center;
    padding-left: 5px;
    background: #f0f0f0;
    border-top-width: 1px;
    white-space: nowrap;
  }

  .swatch {
    width: 11px;
    height: 11px;
    flex-shrink: 0;
    margin-right: 5px;
  }

  .swatch.black {
    background: #000;
  }

  .swatch.olive {
    background: #808000;
    margin-left: 5px;
  }

  .legend span:nth-of-type(1) {
    width: 58px;
  }

  .actions {
    width: 188px;
    margin-left: 1px;
  }

  .act-head {
    height: 19px;
    padding-left: 5px;
    line-height: 19px;
    font-weight: 700;
    background: #f0f0f0;
    border-bottom: 1px solid #a0a0a0;
  }

  .act-sel {
    height: 25px;
    margin-top: 1px;
    display: flex;
    align-items: center;
    justify-content: space-between;
    padding: 0 7px;
    background: linear-gradient(#bcd3ea, #9fbbd9);
  }

  .tri-up {
    width: 0;
    height: 0;
    border: 4.5px solid transparent;
    border-top: 0;
    border-bottom: 5px solid #000;
  }

  .act-item {
    height: 23px;
    display: flex;
    align-items: center;
    justify-content: space-between;
    padding: 0 9px 0 31px;
  }

  .tri-right {
    width: 0;
    height: 0;
    border: 4.5px solid transparent;
    border-right: 0;
    border-left: 5px solid #000;
  }

  .mmc-status {
    flex: 1;
    display: flex;
    justify-content: flex-end;
    gap: 131px;
    padding-right: 87px;
    margin-top: 1px;
    border-top: 1px solid #dcdcdc;
  }

  .mmc-status i {
    width: 1px;
    background: #d4d4d4;
  }

  .page-scroll {
    position: absolute;
    left: 1355px;
    top: 24px;
    width: 11px;
    height: 704px;
    background: #dcdcdc;
    box-sizing: border-box;
    padding-top: 348px;
  }

  .page-scroll span {
    display: block;
    height: 110px;
    background: #a8a8a8;
  }

  .arr-up,
  .arr-down {
    position: absolute;
    left: 2px;
    width: 0;
    height: 0;
    border: 3.5px solid transparent;
  }

  .arr-up {
    top: 38px;
    border-top: 0;
    border-bottom: 4px solid #555;
  }

  .arr-down {
    bottom: 5px;
    border-bottom: 0;
    border-top: 4px solid #555;
  }

  /* --- Taskbar --- */
  .taskbar {
    position: absolute;
    left: 0;
    top: 728px;
    width: 1366px;
    height: 40px;
    display: flex;
    align-items: center;
    background: #1b1b1b;
    color: #f0f0f0;
    font-size: 12px;
  }

  .start {
    width: 20px;
    height: 20px;
    margin: 0 14px;
  }

  .search {
    width: 344px;
    height: 40px;
    box-sizing: border-box;
    display: flex;
    align-items: center;
    gap: 9px;
    padding-left: 14px;
    background: #333;
    border: 1px solid #4c4c4c;
    color: #c8d0d8;
    font-size: 13.5px;
  }

  .search svg {
    width: 16px;
    height: 16px;
  }

  .apps {
    display: flex;
  }

  .app {
    width: 49px;
    height: 40px;
    box-sizing: border-box;
    display: flex;
    align-items: center;
    justify-content: center;
    position: relative;
  }

  .app svg {
    width: 24px;
    height: 24px;
  }

  .app:first-child svg {
    width: 18px;
    height: 16px;
  }

  .app.open::after {
    content: '';
    position: absolute;
    left: 4px;
    right: 4px;
    bottom: 0;
    height: 2px;
    background: #76b9ed;
  }

  .app.active {
    background: #3b3b3b;
  }

  .weather {
    margin-left: 251px;
    width: 149px;
    height: 40px;
    display: flex;
    align-items: center;
    padding-left: 12px;
    box-sizing: border-box;
    background: #585858;
    font-size: 12.5px;
  }

  .weather svg {
    width: 26px;
    height: 24px;
    margin-right: 8px;
  }

  .weather .temp {
    margin-right: 9px;
  }

  .tray {
    flex: 1;
    display: flex;
    align-items: center;
  }

  .tr-chev {
    width: 13px;
    height: 8px;
    margin-left: 6px;
  }

  .tr-net {
    width: 16px;
    height: 14px;
    margin-left: 10px;
  }

  .tr-vol {
    width: 17px;
    height: 14px;
    margin-left: 8px;
  }

  .lang {
    margin-left: 10px;
  }

  .clock {
    width: 70px;
    margin-left: 6px;
    display: flex;
    flex-direction: column;
    align-items: center;
    line-height: 18px;
  }

  .notif {
    position: relative;
    margin-left: 13px;
    width: 24px;
    height: 24px;
  }

  .notif svg {
    width: 17px;
    height: 15px;
  }

  .notif b {
    position: absolute;
    left: 8px;
    top: 8px;
    width: 14px;
    height: 14px;
    border: 1px solid #9a9a9a;
    border-radius: 50%;
    background: #1b1b1b;
    font-size: 11px;
    font-weight: 400;
    line-height: 14px;
    text-align: center;
  }
</style>
